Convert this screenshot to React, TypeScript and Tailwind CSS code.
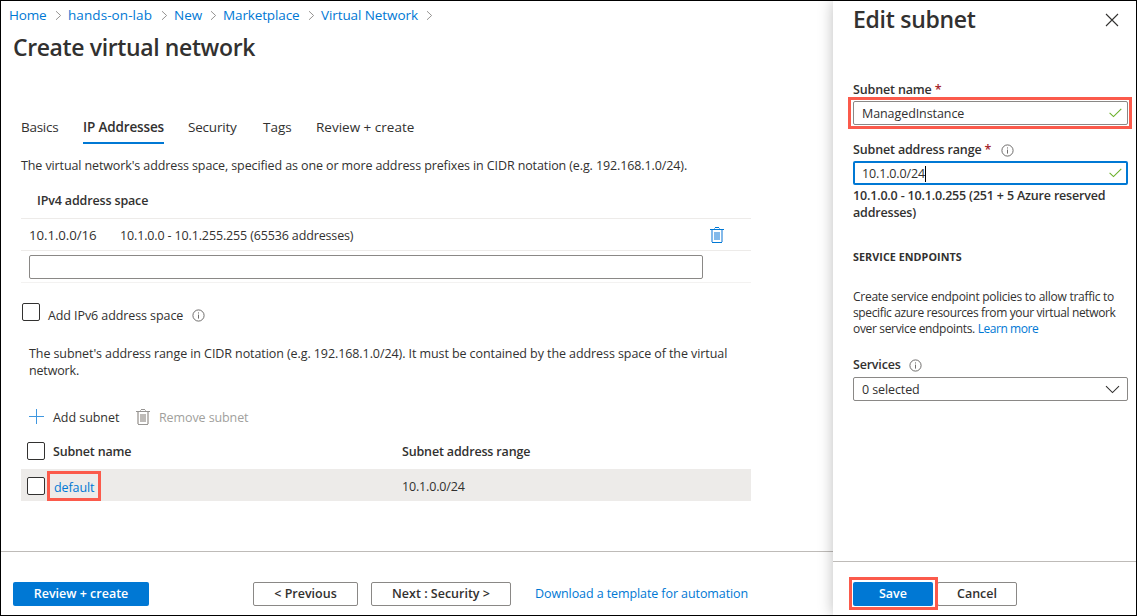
import React from "react";

function Chevron() {
  return (
    <svg className="shrink-0" width="7" height="11" viewBox="0 0 7 11" fill="none" stroke="#8a8886" strokeWidth="0.9">
      <path d="M1 1.2 5.6 5.5 1 9.8" />
    </svg>
  );
}

function Info() {
  return (
    <svg className="shrink-0" width="13" height="13" viewBox="0 0 13 13" fill="none" stroke="#605e5c" strokeWidth="0.9">
      <circle cx="6.5" cy="6.5" r="5.6" />
      <path d="M6.5 5.6v4M6.5 3.4v1.1" />
    </svg>
  );
}

function Trash({ line, fill }: { line: string; fill: string }) {
  return (
    <svg className="shrink-0" width="14" height="16" viewBox="0 0 14 16" shapeRendering="crispEdges">
      <path d="M4 1h1v1H4zM9 1h1v1H9z" fill={fill} />
      <path d="M5 0h4v1H5z" fill={line} />
      <path d="M0 2h14v1H0z" fill={line} />
      <path d="M1 3h2v12H1zM11 3h2v12h-2z" fill={fill} />
      <path d="M2 15h10v1H2z" fill={line} />
      <path d="M4 5h6v8H4z" fill={fill} />
    </svg>
  );
}

function Check() {
  return (
    <svg className="shrink-0" width="13" height="10" viewBox="0 0 13 10" fill="none" stroke="#6bb02a" strokeWidth="1.1">
      <path d="M0.6 4.9 4.5 8.6 12.3 0.8" />
    </svg>
  );
}

function Box() {
  return <span className="size-[18px] shrink-0 rounded-[2px] border border-[#323130] bg-white" />;
}

const crumbs = [
  { label: "Home", cls: "w-[46px] tracking-[-0.15px]" },
  { label: "hands-on-lab", cls: "w-[93px] tracking-[0.08px]" },
  { label: "New", cls: "w-[36px]" },
  { label: "Marketplace", cls: "w-[85px] tracking-[-0.13px]" },
  { label: "Virtual Network", cls: "w-[105px] tracking-[-0.09px]" },
];

export default function App() {
  return (
    <div className="flex h-[616px] w-[1137px] overflow-hidden whitespace-nowrap border border-black bg-white font-['Open_Sans','Noto_Sans',sans-serif] text-[12.5px] text-[#323130]">
      <main className="flex w-[832px] shrink-0 flex-col">
        <nav className="flex h-7 items-center pl-2 text-[13.5px] leading-7 text-[#0078d4]">
          {crumbs.map((c) => (
            <React.Fragment key={c.label}>
              <a className={c.cls}>{c.label}</a>
              <span className="mr-[6px] flex w-[7px]"><Chevron /></span>
            </React.Fragment>
          ))}
        </nav>
        <h1 className="h-9 pl-3 text-[23px] font-semibold leading-9 tracking-[-0.38px]">Create virtual network</h1>

        <div className="mt-12 flex h-[31px] pl-5 text-[13.5px] leading-7">
          <span className="w-[62px] tracking-[-0.27px]">Basics</span>
          <span className="w-[81px] border-b-2 border-[#0078d4] font-semibold leading-7 tracking-[-0.15px]">IP Addresses</span>
          <span className="ml-[24px] w-[75px] tracking-[-0.2px]">Security</span>
          <span className="w-[53px]">Tags</span>
          <span>Review + create</span>
        </div>

        <p className="mt-3 h-5 pl-5 leading-5 tracking-[-0.11px]">
          The virtual network's address space, specified as one or more address prefixes in CIDR notation (e.g. 192.168.1.0/24).
        </p>

        <section className="ml-5 mt-[15px] w-[730px]">
          <div className="h-[28px] border-b border-[#edebe9] pl-4 font-semibold leading-5 tracking-[-0.15px]">IPv4 address space</div>
          <div className="flex h-8 items-center border-b border-[#edebe9] pl-2 leading-8">
            <span className="w-[91px] text-[13.25px] tracking-[-0.08px]">10.1.0.0/16</span>
            <span className="mt-[2px] w-[590px] tracking-[-0.14px]">10.1.0.0 - 10.1.255.255 (65536 addresses)</span>
            <Trash line="#0078d4" fill="#83b9ea" />
          </div>
          <div className="flex h-8 items-center border-b border-[#f3f2f1] pl-2">
            <div className="h-6 w-[674px] rounded-[2px] border border-[#8a8886]" />
          </div>
        </section>

        <div className="ml-[21px] mt-5 flex h-[24px] items-start">
          <Box />
          <span className="ml-[8px] mt-px w-[143.5px] leading-6 tracking-[-0.09px]">Add IPv6 address space</span>
          <span className="mt-[6px] flex"><Info /></span>
        </div>

        <p className="ml-7 mt-[18px] w-[710px] leading-[17px] tracking-[-0.082px]">
          The subnet's address range in CIDR notation (e.g. 192.168.1.0/24). It must be contained by the address space of the virtual
          <br />
          <span className="tracking-[-0.16px]">network.</span>
        </p>

        <div className="ml-7 mt-[27px] flex h-6 items-center leading-6">
          <svg className="-mt-[3px] shrink-0" width="16" height="16" viewBox="0 0 16 16" shapeRendering="crispEdges">
            <path d="M7 0h1v15H7zM0 7h15v1H0z" fill="#3f97e0" />
          </svg>
          <span className="ml-[8px] w-[83px] tracking-[-0.05px]">Add subnet</span>
          <span className="-mt-[2px] flex"><Trash line="#979593" fill="#bebbb8" /></span>
          <span className="ml-[9px] tracking-[-0.1px] text-[#a19f9d]">Remove subnet</span>
        </div>

        <div className="ml-5 mt-[5px] flex h-[34px] w-[730px] items-center pl-[6px] font-semibold leading-[34px]">
          <span className="-mt-[2px] flex"><Box /></span>
          <span className="ml-[8px] w-[349px] tracking-[-0.18px]">Subnet name</span>
          <span className="tracking-[-0.16px]">Subnet address range</span>
        </div>
        <div className="relative ml-5 flex h-8 w-[730px] items-center bg-[#edebe9] pl-[6px] leading-8">
          <span className="mt-[1px] flex"><Box /></span>
          <a className="ml-[9px] mt-[5px] w-[348px] tracking-[-0.1px] text-[#0078d4]">default</a>
          <span className="mt-[3px] tracking-[-0.16px]">10.1.0.0/24</span>
          <span className="absolute left-[26px] top-[2px] h-[30px] w-[54px] border-[3px] border-[#fb5a4b]" />
        </div>

        <footer className="mt-auto flex h-16 items-start border-t border-[#bebbb8] pl-3 pt-[30px] leading-[22px]">
          <button className="h-6 w-[136px] rounded-[2px] bg-[#0078d4] font-semibold text-white">Review + create</button>
          <button className="ml-[104px] h-6 w-[105px] rounded-[2px] border border-[#8a8886] font-semibold">&lt; Previous</button>
          <button className="ml-[13px] h-6 w-[140px] rounded-[2px] border border-[#8a8886] font-semibold">Next : Security &gt;</button>
          <a className="ml-6 mt-px tracking-[-0.09px] text-[#0078d4]">Download a template for automation</a>
        </footer>
      </main>

      <aside className="relative flex w-[303px] shrink-0 flex-col bg-white shadow-[0_0_14px_rgba(0,0,0,0.26)]">
        <header className="flex h-9 items-center justify-between pl-5 pr-[17px]">
          <h2 className="text-[23px] font-semibold leading-9 tracking-[-0.28px]">Edit subnet</h2>
          <svg className="mt-[2px]" width="14" height="14" viewBox="0 0 14 14" fill="none" stroke="#323130" strokeWidth="1.1">
            <path d="M1 1l12 12M13 1 1 13" />
          </svg>
        </header>

        <div className="flex flex-col pl-5 pt-[43px]">
          <label className="h-[21px] font-semibold leading-5 tracking-[-0.15px]">
            Subnet name <span className="text-[#a4262c]">*</span>
          </label>
          <div className="relative flex h-6 w-[275px] items-center justify-between rounded-[2px] border border-[#8a8886] pl-2 pr-[5px]">
            <span className="mt-[2px] leading-[22px] tracking-[-0.08px]">ManagedInstance</span>
            <Check />
            <span className="absolute -left-[6px] -top-[5px] h-8 w-[284px] border-[3px] border-[#fb5a4b]" />
          </div>

          <label className="mt-[15px] flex h-[21px] items-start font-semibold leading-5 tracking-[-0.15px]">
            <span className="w-[147.5px]">Subnet address range <span className="text-[#a4262c]">*</span></span>
            <span className="mt-1 flex"><Info /></span>
          </label>
          <div className="flex h-6 w-[275px] items-center justify-between rounded-[2px] border-2 border-[#0078d4] pl-[7px] pr-[4px]">
            <span className="mt-px flex items-center leading-5 tracking-[-0.134px]">
              10.1.0.0/24
              <span className="h-[16px] w-px bg-black" />
            </span>
            <Check />
          </div>
          <p className="mt-[2px] font-semibold leading-[17px] tracking-[-0.18px]">
            10.1.0.0 - 10.1.0.255 (251 + 5 Azure reserved
            <br />
            addresses)
          </p>

          <h3 className="mt-[26px] h-5 text-[10.75px] font-bold leading-5 tracking-[0.06px]">SERVICE ENDPOINTS</h3>

          <p className="mt-[22px] text-[12px] leading-4">
            <span className="tracking-[-0.27px]">Create service endpoint policies to allow traffic to</span>
            <br />
            <span className="tracking-[-0.36px]">specific azure resources from your virtual network</span>
            <br />
            <span className="tracking-[-0.33px]">over service endpoints. </span>
            <a className="tracking-[-0.45px] text-[#0078d4]">Learn more</a>
          </p>

          <label className="mt-[18px] flex h-[22px] items-start font-semibold leading-5 tracking-[-0.2px]">
            <span className="w-[55.5px]">Services</span>
            <span className="mt-1 flex"><Info /></span>
          </label>
          <div className="flex h-6 w-[275px] items-center justify-between rounded-[2px] border border-[#8a8886] pl-2 pr-[7px]">
            <span className="mt-[2px] leading-[22px] tracking-[-0.1px]">0 selected</span>
            <svg width="15" height="9" viewBox="0 0 15 9" fill="none" stroke="#323130" strokeWidth="1.1">
              <path d="M1 1.2 7.5 7.6 14 1.2" />
            </svg>
          </div>
        </div>

        <footer className="relative mt-auto flex h-[54px] items-start border-t border-[#bebbb8] pl-5 pt-5 leading-[22px]">
          <button className="h-6 w-20 rounded-[2px] bg-[#0078d4] font-semibold text-white">Save</button>
          <button className="ml-1 h-6 w-20 rounded-[2px] border border-[#8a8886] font-semibold">Cancel</button>
          <span className="absolute left-4 top-[15px] h-[33px] w-[89px] border-[3px] border-[#fb5a4b]" />
        </footer>
      </aside>
    </div>
  );
}
